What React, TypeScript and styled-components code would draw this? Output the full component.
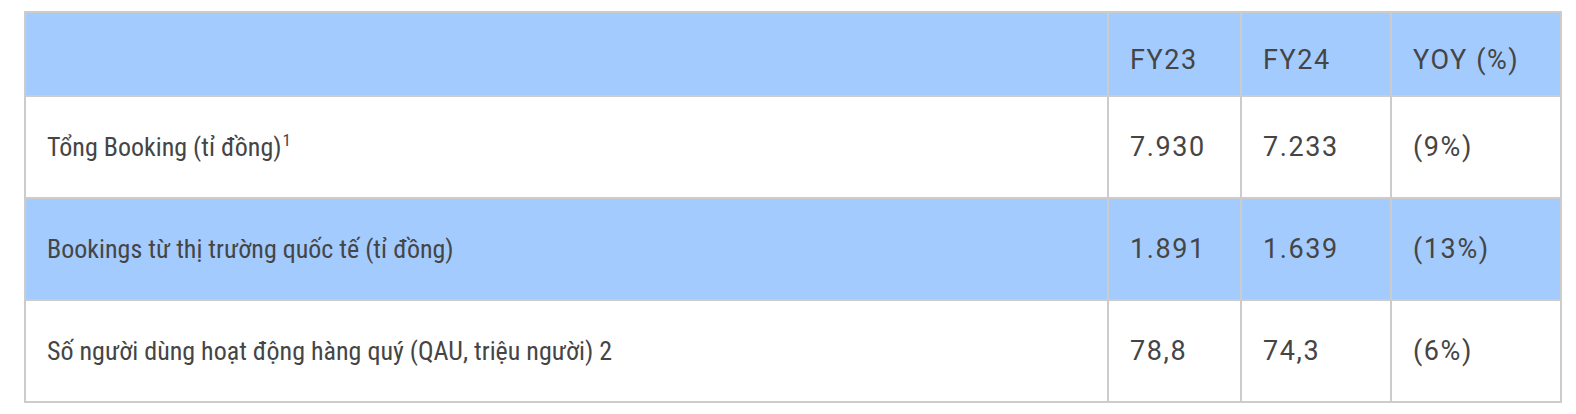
import styled, { createGlobalStyle } from 'styled-components';

const GlobalStyle = createGlobalStyle`
  body {
    margin: 0;
    background: #ffffff;
    font-family: 'Roboto Condensed', Roboto, 'Noto Sans', Arial, sans-serif;
  }
`;

const Page = styled.div`
  padding: 11px 16px 0 24px;
`;

const Table = styled.table`
  width: 1536px;
  border-collapse: collapse;
  table-layout: fixed;
  color: #454545;
  font-size: 26px;
`;

const Row = styled.tr<{ $shaded?: boolean; $head?: boolean }>`
  background: ${p => (p.$shaded ? '#a4cbfe' : '#ffffff')};
  height: ${p => (p.$head ? '84px' : '102px')};
`;

const Cell = styled.td<{ $head?: boolean; $num?: boolean }>`
  border: 2px solid #cccccc;
  padding: ${p => (p.$head ? '12px 16px 0 21px' : '0 16px 0 21px')};
  vertical-align: middle;
  white-space: nowrap;
  font-weight: 400;
  font-family: ${p => (p.$num ? "Roboto, 'Noto Sans', Arial, sans-serif" : 'inherit')};
  font-size: ${p => (p.$num ? '27px' : '26px')};
  letter-spacing: ${p => (p.$num ? '1.6px' : '0')};
`;

const Sup = styled.sup`
  font-size: 17px;
  vertical-align: 10px;
  line-height: 0;
  margin-left: 1px;
`;

type Metric = {
  label: React.ReactNode;
  fy23: string;
  fy24: string;
  yoy: string;
};

const metrics: Metric[] = [
  {
    label: (
      <>
        Tổng Booking (tỉ đồng)<Sup>1</Sup>
      </>
    ),
    fy23: '7.930',
    fy24: '7.233',
    yoy: '(9%)',
  },
  {
    label: 'Bookings từ thị trường quốc tế (tỉ đồng)',
    fy23: '1.891',
    fy24: '1.639',
    yoy: '(13%)',
  },
  {
    label: 'Số người dùng hoạt động hàng quý (QAU, triệu người) 2',
    fy23: '78,8',
    fy24: '74,3',
    yoy: '(6%)',
  },
];

const App = () => {
  return (
    <Page>
      <GlobalStyle />
      <Table>
        <colgroup>
          <col style={{ width: 1083 }} />
          <col style={{ width: 133 }} />
          <col style={{ width: 150 }} />
          <col style={{ width: 170 }} />
        </colgroup>
        <thead>
          <Row $shaded $head>
            <Cell $head />
            <Cell $head $num>FY23</Cell>
            <Cell $head $num>FY24</Cell>
            <Cell $head $num>YOY (%)</Cell>
          </Row>
        </thead>
        <tbody>
          {metrics.map((m, i) => (
            <Row key={i} $shaded={i % 2 === 1}>
              <Cell>{m.label}</Cell>
              <Cell $num>{m.fy23}</Cell>
              <Cell $num>{m.fy24}</Cell>
              <Cell $num>{m.yoy}</Cell>
            </Row>
          ))}
        </tbody>
      </Table>
    </Page>
  );
};

export default App;
